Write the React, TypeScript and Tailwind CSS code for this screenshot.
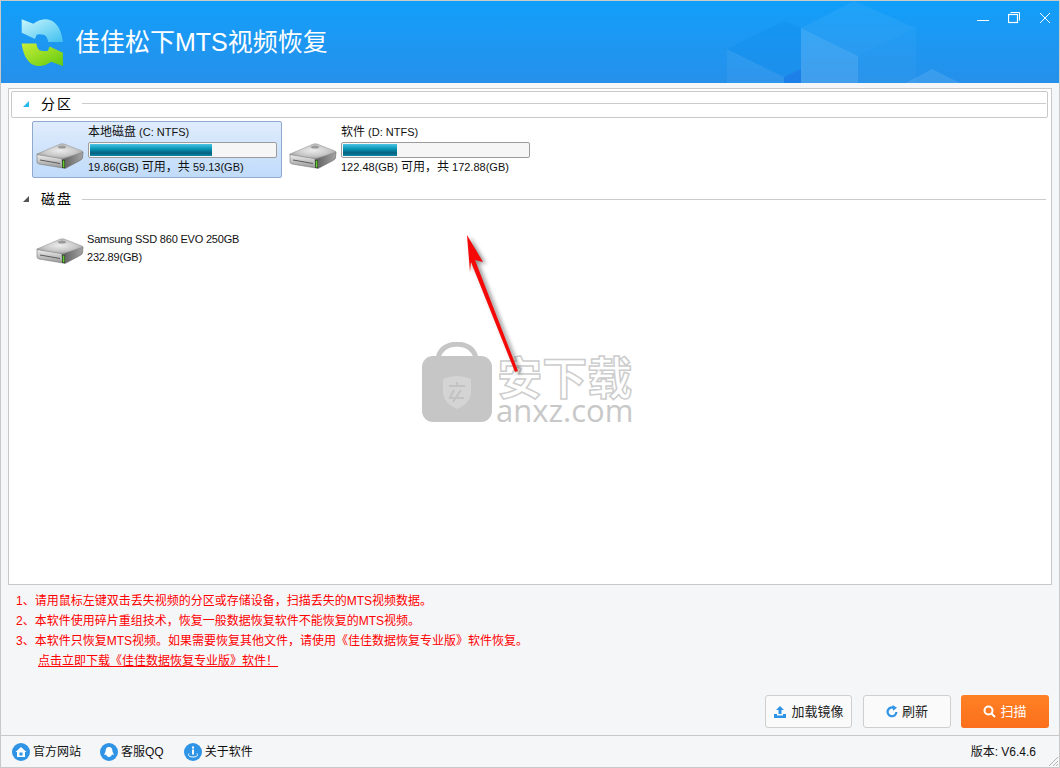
const cjk = "font-['Liberation_Sans','Noto_Sans_CJK_SC',sans-serif]";

function DiskIcon() {
  return (
    <svg width="48" height="26" viewBox="0 0 48 26" className="shrink-0">
      <defs>
        <radialGradient id="diskTop" cx="0.5" cy="0.45" r="0.6">
          <stop offset="0" stopColor="#ececec" />
          <stop offset="0.6" stopColor="#c8c8c8" />
          <stop offset="1" stopColor="#9a9a9a" />
        </radialGradient>
        <linearGradient id="diskFront" x1="0" y1="0" x2="0" y2="1">
          <stop offset="0" stopColor="#f4f4f4" />
          <stop offset="1" stopColor="#969696" />
        </linearGradient>
        <linearGradient id="diskSide" x1="0" y1="0" x2="1" y2="0">
          <stop offset="0" stopColor="#5c5c5c" />
          <stop offset="1" stopColor="#a4a4a4" />
        </linearGradient>
      </defs>
      <path d="M1 11L26 15.5L27 25L3 21Q1 20.5 1 19Z" fill="url(#diskFront)" stroke="#7a7a7a" strokeWidth="0.6" strokeLinejoin="round" />
      <path d="M26 15.5L47 9L46.5 15Q46 16.5 44 17.5L29 25.5L27 25Z" fill="url(#diskSide)" stroke="#666" strokeWidth="0.6" strokeLinejoin="round" />
      <path d="M1 11L24 1.2Q26 0.4 28 1L46.5 8.2Q47.5 9 46 9.6L28 15.4Q26.5 15.9 25 15.5L1.5 11.8Q0.4 11.4 1 11Z" fill="url(#diskTop)" stroke="#8a8a8a" strokeWidth="0.5" />
      <ellipse cx="26" cy="4" rx="4" ry="1.6" fill="#9a9a9a" />
      <path d="M4 17L24 20.5" stroke="#5c5c5c" strokeWidth="1" />
      <rect x="26" y="17" width="3" height="8" fill="#2d2d2d" />
      <rect x="26.7" y="17.5" width="1.7" height="7" fill="#5fd02e" />
    </svg>
  );
}

function Logo() {
  const half = "M1.7 1.3L13.3 5.7Q20 1 26.7 1.3Q40 3 43 24L28.3 24Q27 17 23.3 16.7Q19 16 16.7 16.7L15 21L1.7 14.7Z";
  return (
    <svg width="44" height="48" viewBox="0 0 44 48" className="shrink-0">
      <defs>
        <linearGradient id="logoTop" x1="0" y1="0" x2="1" y2="1">
          <stop offset="0" stopColor="#c8f6fc" />
          <stop offset="1" stopColor="#3fc0f0" />
        </linearGradient>
        <linearGradient id="logoBottom" x1="1" y1="1" x2="0" y2="0">
          <stop offset="0" stopColor="#c8ee38" />
          <stop offset="1" stopColor="#62ca10" />
        </linearGradient>
      </defs>
      <path d={half} fill="url(#logoTop)" />
      <path d={half} fill="url(#logoBottom)" transform="rotate(180 22.3 24.7)" />
    </svg>
  );
}

function Cubes() {
  return (
    <svg width="360" height="83" viewBox="0 0 360 83" className="absolute right-0 top-0">
      <polygon points="28,48 85,20 102,27 102,68 85,76" fill="#0d8cec" opacity="0.35" />
      <polygon points="28,48 85,76 85,83 28,83" fill="#ffffff" opacity="0.05" />
      <polygon points="85,76 102,68 102,83 85,83" fill="#1c7ce8" opacity="0.8" />
      <polygon points="102,27 155,0 217,27 159,55" fill="#ffffff" opacity="0.05" />
      <polygon points="102,27 159,55 159,83 102,83" fill="#ffffff" opacity="0.13" />
      <polygon points="159,55 217,27 217,83 159,83" fill="#ffffff" opacity="0.03" />
      <polygon points="205,83 233,68 263,83" fill="#ffffff" opacity="0.1" />
    </svg>
  );
}

function SectionTitle({ title, color }: { title: string; color: string }) {
  return (
    <div className="flex items-center">
      <svg width="8" height="8" viewBox="0 0 8 8" className="ml-[4px] shrink-0">
        <polygon points="7,1 7,7 1,7" fill={color} />
      </svg>
      <span className="ml-[11px] w-[30px] whitespace-nowrap text-[14px] leading-[18px] tracking-[2px] text-black">{title}</span>
      <div className="ml-[11px] h-px flex-1 bg-[#cbcbcb]" />
    </div>
  );
}

function Partition({ name, rest, free, total, pct, selected }: { name: string; rest: string; free: string; total: string; pct: number; selected?: boolean }) {
  return (
    <div
      className={`flex h-[57px] w-[250px] items-center rounded-[2px] border pl-[3px] ${
        selected ? "border-[#8fa9cf] bg-gradient-to-b from-[#dfecfc] to-[#c0dbfa]" : "border-transparent"
      }`}
    >
      <div className="mt-[13px]">
        <DiskIcon />
      </div>
      <div className="ml-[4px] w-[189px] whitespace-nowrap pb-px text-[11px] leading-[14px] text-[#111]">
        <div>
          <span className="text-[12px]">{name}</span> {rest}
        </div>
        <div className="mb-[2px] mt-[3px] h-[16px] w-[189px] rounded-[2px] border border-[#9c9c9c] bg-[#f6f6f6] p-px">
          <div
            className="h-full bg-[linear-gradient(#4cc4e4,#0797b5_40%,#05617f_75%,#0a8aa8)]"
            style={{ width: `${pct}%` }}
          />
        </div>
        <div>
          {free} <span className="text-[12px]">可用&#xFF0C;共</span> {total}
        </div>
      </div>
    </div>
  );
}

function Watermark() {
  return (
    <div className="pointer-events-none absolute left-[412px] top-[253px] flex items-start">
      <svg width="72" height="82" viewBox="0 0 72 82" className="shrink-0">
        <path d="M17 16 Q20 3 36 2 Q52 3 55 16" fill="none" stroke="#c6c6c6" strokeWidth="5" />
        <rect x="1" y="14" width="70" height="66" rx="11" fill="#c6c6c6" />
        <path d="M22 37 Q36 31 50 37 L50 52 Q48 62 36 67 Q24 62 22 52 Z" fill="#d4d4d4" />
        <path d="M36 40 L36 44 M28 44 L44 44 M33 48 L29 56 L43 56 M40 48 L32 60" stroke="#c2c2c2" strokeWidth="2" fill="none" />
      </svg>
      <div className="ml-[3px] mt-[13px] flex flex-col items-center">
        <div className="whitespace-nowrap text-[45px] font-bold leading-[42px] text-white [-webkit-text-stroke:1.5px_#cdcdcd] font-['Noto_Sans_CJK_SC',sans-serif]">
          安下载
        </div>
        <div className="whitespace-nowrap text-[31px] leading-[26px] text-[#c8c8c8] font-['Open_Sans',sans-serif]">
          anxz.com
        </div>
      </div>
    </div>
  );
}

function Arrow() {
  return (
    <svg width="70" height="150" viewBox="0 0 70 150" className="pointer-events-none absolute left-[441px] top-[140px] drop-shadow-[3px_2px_2px_rgba(0,0,0,0.45)]">
      <polygon points="17,6 33,33 25,31 68,142 65,143 21,33 20,43" fill="#f40808" />
    </svg>
  );
}

function FooterLink({ label, children }: { label: string; children: React.ReactNode }) {
  return (
    <div className="flex items-center gap-[3px]">
      <span className="flex h-[18px] w-[18px] items-center justify-center rounded-full bg-[#2f93e6]">
        <svg width="12" height="12" viewBox="0 0 12 12">{children}</svg>
      </span>
      <span className="text-[12px] text-[#111]">{label}</span>
    </div>
  );
}

export default function App() {
  return (
    <div className={`flex h-[768px] w-[1060px] flex-col overflow-hidden border border-[#c9c9c9] bg-[#f5f6f8] ${cjk}`}>
      {/* Title bar */}
      <header className="relative flex h-[82px] shrink-0 items-center overflow-hidden bg-gradient-to-b from-[#0f9ffa] to-[#2590ea] pl-[19px]">
        <Cubes />
        <Logo />
        <h1 className="relative ml-[11px] whitespace-nowrap text-[25px] font-normal leading-none text-white">
          佳佳松下MTS视频恢复
        </h1>
        <div className="absolute right-[8px] top-[11px] flex items-center gap-[19px]">
          <svg width="12" height="12" viewBox="0 0 12 12"><path d="M0 8.5H12" stroke="#fff" /></svg>
          <svg width="12" height="12" viewBox="0 0 12 12" fill="none" stroke="#fff">
            <rect x="0.5" y="2.5" width="9" height="8" strokeWidth="1.2" />
            <path d="M2.5 0.5H11.5V8.5" />
          </svg>
          <svg width="12" height="12" viewBox="0 0 12 12"><path d="M1 1L11 11M11 1L1 11" stroke="#fff" /></svg>
        </div>
      </header>

      {/* Device list */}
      <main className="relative mx-[7px] mt-[5px] h-[497px] shrink-0 border border-[#c9c9c9] bg-white pl-[2px] pr-[3px] pt-[2px]">
        <div className="flex h-[27px] flex-col justify-center rounded-[2px] border border-[#c9c9c9] pb-[2px] pl-[6px] pr-[1px]">
          <SectionTitle title="分区" color="#27b7ef" />
        </div>
        <div className="ml-[21px] mt-[3px] flex gap-[3px]">
          <Partition name="本地磁盘" rest="(C: NTFS)" free="19.86(GB)" total="59.13(GB)" pct={66} selected />
          <Partition name="软件" rest="(D: NTFS)" free="122.48(GB)" total="172.88(GB)" pct={29} />
        </div>
        <div className="mt-[12px] pl-[7px] pr-[2px]">
          <SectionTitle title="磁盘" color="#555" />
        </div>
        <div className="ml-[25px] mt-[22px] flex items-start">
          <div className="mt-[8px]">
            <DiskIcon />
          </div>
          <div className="ml-[3px] text-[11px] leading-[18px] tracking-[-0.2px] text-[#111]">
            <div>Samsung SSD 860 EVO 250GB</div>
            <div>232.89(GB)</div>
          </div>
        </div>
        <Watermark />
        <Arrow />
      </main>

      {/* Notes */}
      <div className="ml-[15px] mt-[6px] text-[12px] leading-[20px] text-[#ff0000]">
        <p>1、请用鼠标左键双击丢失视频的分区或存储设备&#xFF0C;扫描丢失的MTS视频数据。</p>
        <p>2、本软件使用碎片重组技术&#xFF0C;恢复一般数据恢复软件不能恢复的MTS视频。</p>
        <p>3、本软件只恢复MTS视频。如果需要恢复其他文件&#xFF0C;请使用《佳佳数据恢复专业版》软件恢复。</p>
        <p className="ml-[22px] underline">点击立即下载《佳佳数据恢复专业版》软件&#xFF01;</p>
      </div>

      {/* Actions */}
      <div className="mr-[10px] mt-[24px] flex justify-end gap-[10px] text-[13px]">
        <button className="mr-px flex h-[33px] w-[87px] items-center justify-center gap-[4px] rounded-[3px] border border-[#cfcfcf] bg-[#fafafa] text-[#222]">
          <svg width="14" height="14" viewBox="0 0 14 14" fill="#2f93e6">
            <path d="M7 1L11 5H8.5V9H5.5V5H3Z" />
            <path d="M1 9H4V10.5H10V9H13V13H1Z" />
          </svg>
          加载镜像
        </button>
        <button className="flex h-[33px] w-[88px] items-center justify-center gap-[4px] rounded-[3px] border border-[#cfcfcf] bg-[#fafafa] text-[#222]">
          <svg width="12" height="13" viewBox="0 0 12 13" fill="none">
            <path d="M8.5 3.2A4.4 4.4 0 1 0 10.4 7" stroke="#2f93e6" strokeWidth="2.2" />
            <path d="M6.5 0L11 2.8L7 5.8Z" fill="#2f93e6" />
          </svg>
          刷新
        </button>
        <button className="flex h-[33px] w-[88px] items-center justify-center gap-[4px] rounded-[3px] bg-gradient-to-b from-[#ff8124] to-[#fb6f1c] text-white">
          <svg width="13" height="13" viewBox="0 0 13 13" fill="none" stroke="#fff" strokeWidth="2">
            <circle cx="5.5" cy="5.5" r="4" />
            <path d="M8.5 8.5L12 12" />
          </svg>
          扫描
        </button>
      </div>

      {/* Status bar */}
      <footer className="relative mt-[7px] flex h-[32px] items-center border-t border-[#c9c9c9] pl-[11px]">
        <div className="flex items-center gap-[19px]">
          <FooterLink label="官方网站">
            <path d="M6 1L11.5 6H10V11H2V6H0.5Z" fill="#fff" />
            <rect x="4.5" y="6.5" width="3" height="3" fill="#2f93e6" />
          </FooterLink>
          <FooterLink label="客服QQ">
            <path d="M6 1C8.5 1 9.5 3 9.5 5.5L11 9L9 8.5C8.5 10 7.5 11 6 11C4.5 11 3.5 10 3 8.5L1 9L2.5 5.5C2.5 3 3.5 1 6 1Z" fill="#fff" />
          </FooterLink>
          <div className="ml-px">
            <FooterLink label="关于软件">
              <rect x="5" y="0.5" width="2" height="2" fill="#fff" />
              <rect x="5" y="3.5" width="2" height="5" fill="#fff" />
              <path d="M2 7.5C0.5 10 3 11 6 11C9 11 11.5 10 10 7.5" stroke="#fff" fill="none" />
            </FooterLink>
          </div>
        </div>
        <div className="ml-auto mr-[23px] text-[12px] text-[#111]">版本: V6.4.6</div>
        <svg width="12" height="12" viewBox="0 0 12 12" className="absolute bottom-0 right-0" stroke="#b5b5b5">
          <path d="M11 2L2 11M11 6L6 11M11 9L9 11" />
        </svg>
      </footer>
    </div>
  );
}
